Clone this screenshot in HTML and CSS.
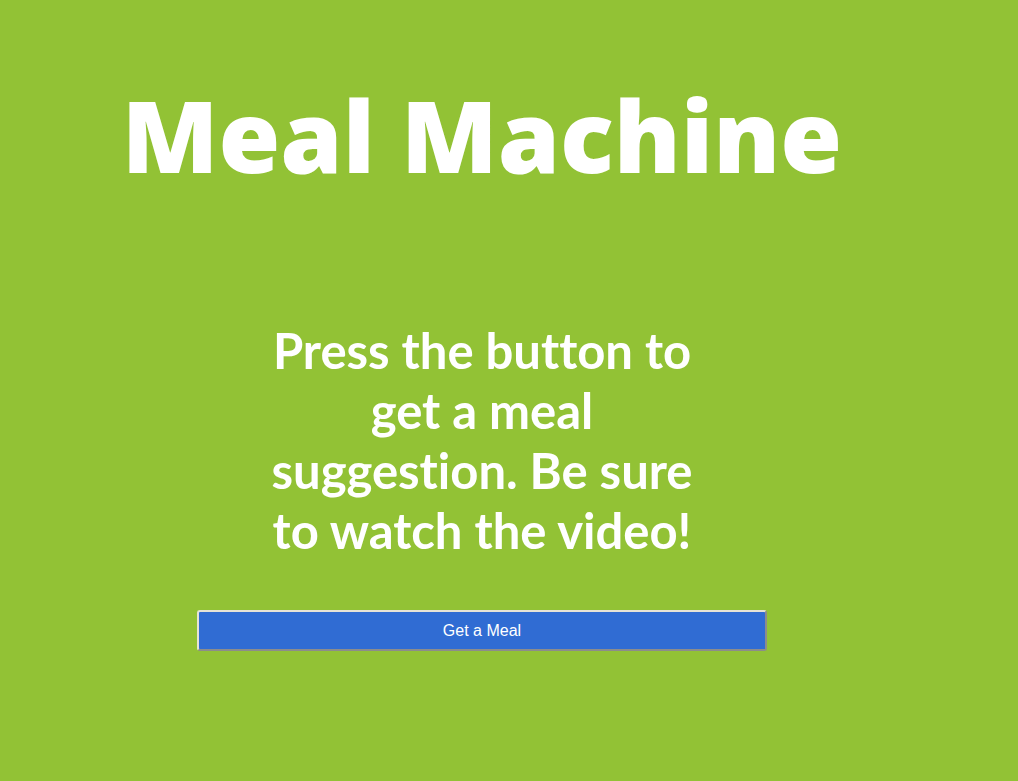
FILE: index.html
```html
<!DOCTYPE html>
<html lang="en">
<head>
<meta charset="utf-8">
<title>Meal Machine</title>
<link rel="stylesheet" href="styles.css">
</head>
<body>
<main class="page">
  <h1 class="title">Meal Machine</h1>
  <p class="intro">Press the button to get a meal suggestion. Be sure to watch the video!</p>
  <button class="meal-btn" type="button">Get a Meal</button>
</main>
</body>
</html>
```
FILE: styles.css
```css
html, body {
  margin: 0;
  padding: 0;
  background: #92c235;
}
body {
  min-height: 781px;
}
.page {
  width: 964px;
  display: flex;
  flex-direction: column;
  align-items: center;
}
.title {
  margin: 66px 0 0;
  font-family: "Open Sans", sans-serif;
  font-weight: 800;
  font-size: 100px;
  line-height: 136px;
  color: #fff;
  text-align: center;
}
.intro {
  margin: 118px 0 0;
  width: 440px;
  font-family: Lato, sans-serif;
  font-weight: 700;
  font-size: 49px;
  line-height: 60px;
  font-variant-ligatures: no-common-ligatures;
  font-feature-settings: "liga" 0;
  color: #fff;
  text-align: center;
}
.meal-btn {
  margin-top: 50px;
  width: 570px;
  height: 41px;
  background: #306cd3;
  color: #fff;
  font-family: "Liberation Sans", Arial, sans-serif;
  font-size: 16px;
  border-style: solid;
  border-width: 2px;
  border-color: #e6e3d6 #8c8c8c #8c8c8c #e6e3d6;
  border-radius: 3px;
  padding: 0;
}
```
